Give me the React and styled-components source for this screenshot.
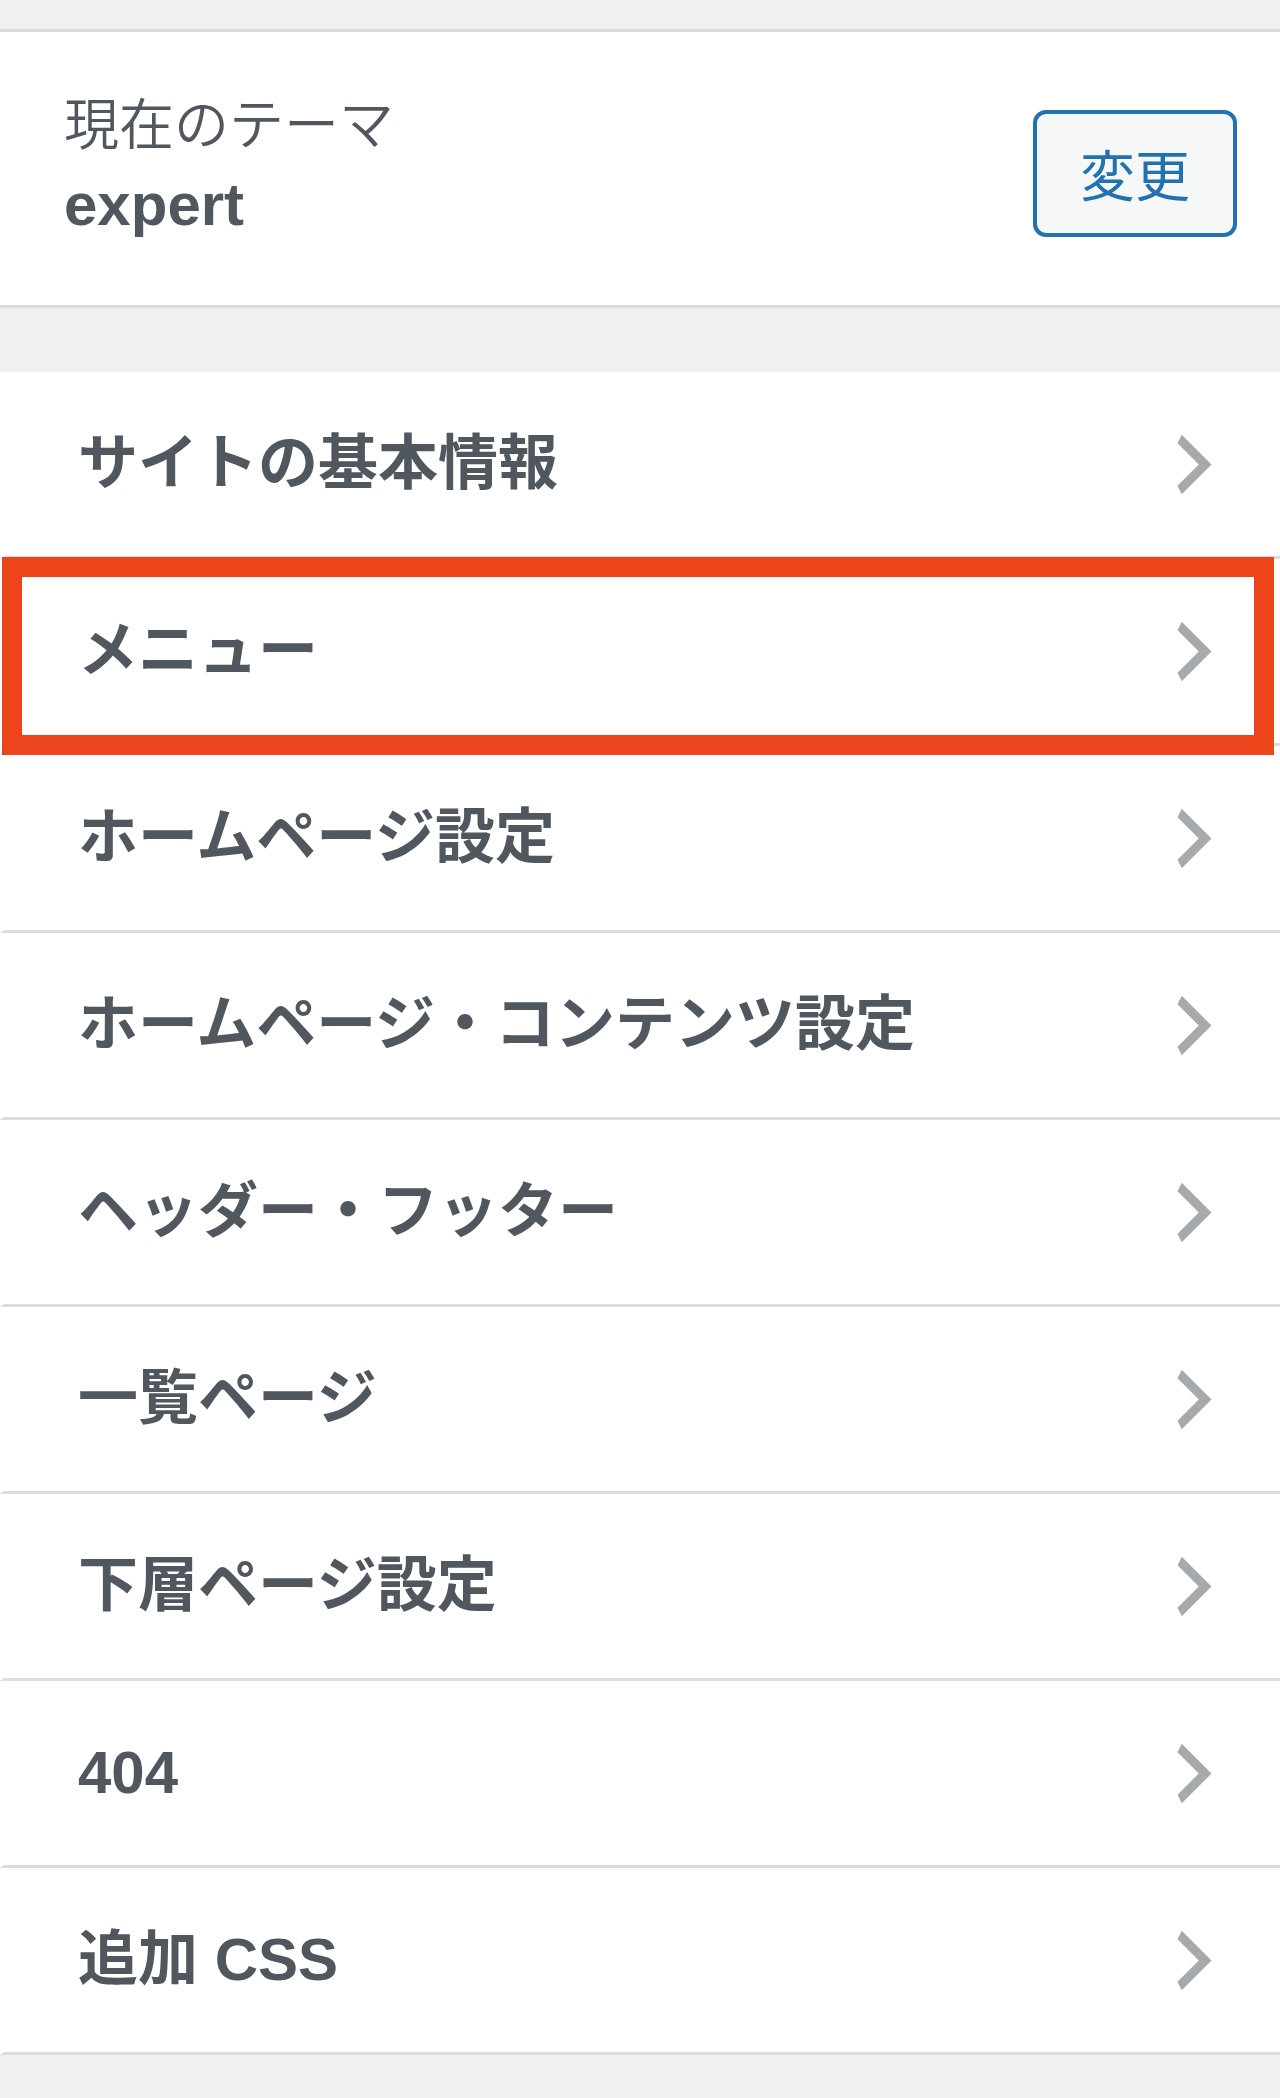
import React from 'react'
import styled, { createGlobalStyle } from 'styled-components'

const GlobalStyle = createGlobalStyle`
	html, body {
		margin: 0;
		padding: 0;
		background: #f0f0f1;
	}

	body {
		font-family: 'Liberation Sans', 'Noto Sans CJK JP', sans-serif;
		color: #50575e;
	}
`

const sections = [
	'サイトの基本情報',
	'メニュー',
	'ホームページ設定',
	'ホームページ・コンテンツ設定',
	'ヘッダー・フッター',
	'一覧ページ',
	'下層ページ設定',
	'404',
	'追加 CSS',
]

const ChevronIcon = () => (
	<Chevron viewBox="0 0 20 20" aria-hidden="true">
		<path d="M6 15l5-5-5-5 1-2 7 7-7 7z" />
	</Chevron>
)

const App = () => {
	return (
		<Sidebar>
			<GlobalStyle />
			<ThemePanel>
				<ThemeInfo>
					<ThemeLabel>現在のテーマ</ThemeLabel>
					<ThemeName>expert</ThemeName>
				</ThemeInfo>
				<ChangeButton type="button">変更</ChangeButton>
			</ThemePanel>

			<SectionList>
				{sections.map((title) => (
					<SectionRow key={title}>
						<SectionTitle>{title}</SectionTitle>
						<ChevronIcon />
						{title === 'メニュー' && <Highlight />}
					</SectionRow>
				))}
			</SectionList>
		</Sidebar>
	)
}

const Sidebar = styled.div`
	width: 1280px;
	min-height: 2098px;
	padding-top: 29px;
	box-sizing: border-box;
	background: #f0f0f1;
`

const ThemePanel = styled.section`
	display: flex;
	align-items: center;
	justify-content: space-between;
	height: 273px;
	padding: 0 43px 0 64px;
	margin-bottom: 64px;
	background: #fff;
	border-top: 3px solid #dcdcde;
	border-bottom: 3px solid #dcdcde;
`

const ThemeInfo = styled.div`
	display: flex;
	flex-direction: column;
	padding-bottom: 13px;
`

const ThemeLabel = styled.span`
	margin-bottom: 19px;
	font-family: 'Noto Sans CJK JP', sans-serif;
	font-size: 55px;
	font-weight: 350;
	line-height: 66px;
	color: #50575e;
`

const ThemeName = styled.span`
	font-size: 60px;
	font-weight: 700;
	line-height: 66px;
	color: #50575e;
`

const ChangeButton = styled.button`
	width: 204px;
	height: 127px;
	margin-top: 10px;
	padding: 0 0 4px;
	box-sizing: border-box;
	border: 4px solid #2271b1;
	border-radius: 13px;
	background: #f6f7f7;
	color: #2271b1;
	font-family: 'Noto Sans CJK JP', sans-serif;
	font-size: 55px;
	font-weight: 400;
	cursor: pointer;
`

const SectionList = styled.ul`
	margin: 0;
	padding: 0;
	list-style: none;
	background: #fff;
`

const SectionRow = styled.li`
	position: relative;
	display: flex;
	align-items: center;
	justify-content: space-between;
	height: 187px;
	box-sizing: border-box;
	padding: 0 43px 0 74px;
	border-left: 4px solid #fff;
	border-bottom: 3px solid #dcdcde;
	background: #fff;
`

const SectionTitle = styled.span`
	font-size: 60px;
	font-weight: 700;
	line-height: 1;
	color: #50575e;
`

const Chevron = styled.svg`
	width: 85px;
	height: 85px;
	flex-shrink: 0;
	fill: #a7aaad;
`

const Highlight = styled.div`
	position: absolute;
	z-index: 1;
	top: -2px;
	left: -2px;
	right: 6px;
	bottom: -12px;
	border: 20px solid #ec451b;
	pointer-events: none;
`

export default App
